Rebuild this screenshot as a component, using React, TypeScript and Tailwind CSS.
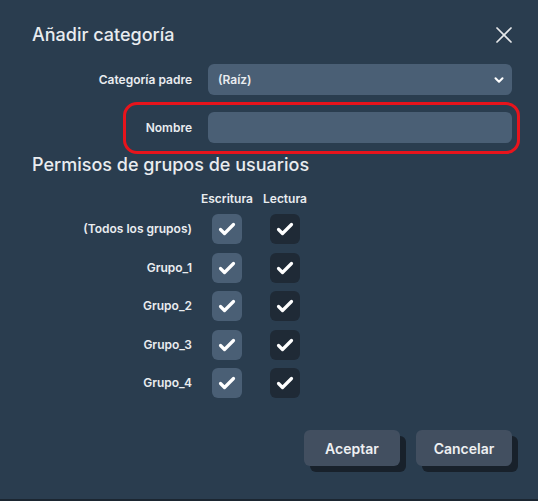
import { X, ChevronDown } from "lucide-react";

const groups = ["(Todos los grupos)", "Grupo_1", "Grupo_2", "Grupo_3", "Grupo_4"];

function Check({ dark }: { dark?: boolean }) {
  return (
    <div
      className={`w-[30px] h-[30px] rounded-[6px] flex items-center justify-center ${
        dark ? "bg-[#1f2a36]" : "bg-[#4a5f75]"
      }`}
    >
      <svg width="30" height="30" viewBox="0 0 30 30">
        <path
          d="M8.5 15.5 L12.5 19.5 L21.5 10.5"
          fill="none"
          stroke="#ffffff"
          strokeWidth="3.2"
          strokeLinecap="round"
          strokeLinejoin="round"
        />
      </svg>
    </div>
  );
}

export default function App() {
  return (
    <div className="relative w-[538px] h-[501px] bg-[#2a3d4f] border-b-2 border-[#1b2631] text-[#e9ecef] font-['Inter',sans-serif] overflow-hidden">
      {/* Header */}
      <div className="flex items-center justify-between pl-[32px] pr-[20px] pt-[21px]">
        <h1 className="text-[18px] leading-[26px] font-medium">Añadir categoría</h1>
        <X className="w-[28px] h-[28px] text-[#e6e8ea]" strokeWidth={1.5} />
      </div>

      {/* Form */}
      <div className="mt-[15px] flex flex-col gap-[17px] pl-[32px] pr-[26px]">
        <div className="flex items-center">
          <label className="w-[160px] text-right text-[12px] font-semibold">Categoría padre</label>
          <div className="ml-[16px] flex-1 h-[31px] rounded-[6px] bg-[#4a5f75] flex items-center justify-between pl-[10px] pr-[6px]">
            <span className="text-[12px] font-semibold">(Raíz)</span>
            <ChevronDown className="w-[14px] h-[14px] text-white" strokeWidth={3.5} />
          </div>
        </div>
        <div className="flex items-center">
          <label className="w-[160px] text-right text-[12px] font-semibold">Nombre</label>
          <div className="ml-[16px] flex-1 h-[31px] rounded-[6px] bg-[#4a5f75]" />
        </div>
      </div>

      {/* Permissions */}
      <h2 className="mt-[9px] pl-[32px] text-[18px] leading-[26px] font-medium">
        Permisos de grupos de usuarios
      </h2>
      <div className="mt-[13px] pl-[32px]">
        <div className="flex text-[12px] leading-[16px] font-semibold">
          <div className="w-[160px]" />
          <div className="ml-[20px] w-[30px] flex justify-center whitespace-nowrap">Escritura</div>
          <div className="ml-[28px] w-[30px] flex justify-center whitespace-nowrap">Lectura</div>
        </div>
        <div className="mt-[7px] flex flex-col gap-[8.5px]">
          {groups.map((g) => (
            <div key={g} className="flex items-center">
              <div className="w-[160px] text-right text-[12px] font-semibold">{g}</div>
              <div className="ml-[20px]">
                <Check />
              </div>
              <div className="ml-[28px]">
                <Check dark />
              </div>
            </div>
          ))}
        </div>
      </div>

      {/* Buttons */}
      <div className="mt-[32px] flex justify-end gap-[16px] pr-[26px]">
        <button className="w-[96px] h-[36px] rounded-[6px] bg-[#424f60] shadow-[6px_6px_0_#18212b] text-[14px] font-semibold text-[#eef0f2]">
          Aceptar
        </button>
        <button className="w-[96px] h-[36px] rounded-[6px] bg-[#424f60] shadow-[6px_6px_0_#18212b] text-[14px] font-semibold text-[#eef0f2]">
          Cancelar
        </button>
      </div>

      {/* Annotation outline */}
      <div className="absolute left-[123px] top-[102px] w-[397px] h-[52px] rounded-[14px] border-[3px] border-[#e8141c]" />
    </div>
  );
}
